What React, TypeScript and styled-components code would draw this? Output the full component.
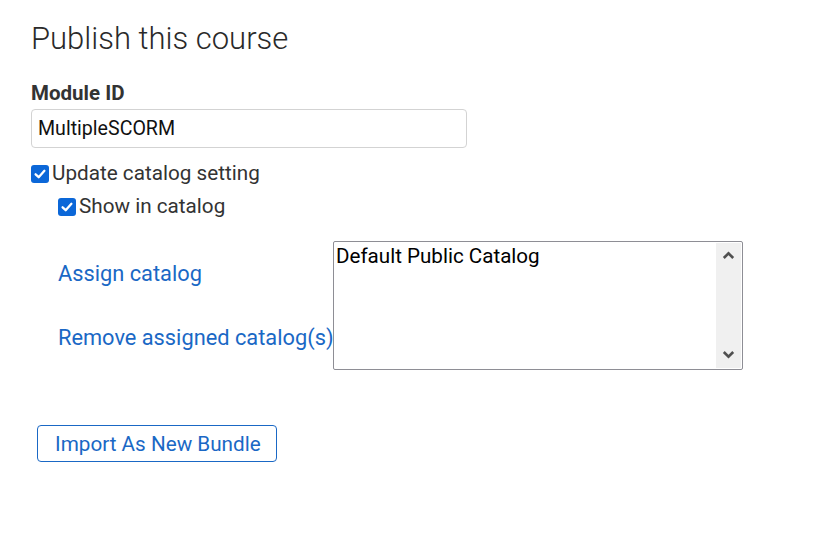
import styled, { createGlobalStyle } from 'styled-components';

const GlobalStyle = createGlobalStyle`
  html, body {
    margin: 0;
    padding: 0;
    background: #fff;
  }
  body {
    font-family: Roboto, "Liberation Sans", Arial, sans-serif;
    color: #333;
  }
`;

const Page = styled.div`
  padding: 20px 32px 40px 31px;
  display: flex;
  flex-direction: column;
  align-items: flex-start;
`;

const Title = styled.h1`
  margin: 0;
  font-size: 31px;
  font-weight: 300;
  line-height: 38px;
  color: #2a2a2a;
`;

const FieldLabel = styled.label`
  margin-top: 24px;
  font-size: 20.5px;
  font-weight: 700;
  line-height: 22px;
  color: #333;
`;

const TextInput = styled.input`
  box-sizing: border-box;
  margin-top: 5px;
  width: 436px;
  height: 39px;
  padding: 0 6px;
  border: 1px solid #d3d3d3;
  border-radius: 4px;
  font-family: inherit;
  font-size: 19.6px;
  color: #111;
  outline: none;
`;

const CheckRow = styled.label<{ $indent?: number }>`
  display: flex;
  align-items: center;
  margin-left: ${({ $indent }) => $indent ?? 0}px;
  font-size: 20.7px;
  line-height: 33px;
  color: #333;
  cursor: pointer;
`;

const CheckBox = styled.span`
  width: 18px;
  height: 18px;
  border-radius: 3px;
  background: #0b67d8;
  display: inline-flex;
  align-items: center;
  justify-content: center;
  margin-right: 3px;
  flex-shrink: 0;
`;

const CatalogRow = styled.div`
  display: flex;
  align-items: stretch;
  margin-top: 18px;
  margin-left: 27px;
`;

const LinkColumn = styled.div`
  width: 275px;
  display: flex;
  flex-direction: column;
  justify-content: center;
  gap: 40px;
`;

const TextLink = styled.a`
  font-size: 21.8px;
  line-height: 24px;
  color: #1a68c5;
  text-decoration: none;
  white-space: nowrap;
  cursor: pointer;
`;

const ListBox = styled.div`
  box-sizing: border-box;
  width: 410px;
  height: 129px;
  padding: 1px;
  border: 1px solid #8e8e95;
  border-radius: 2px;
  display: flex;
`;

const ListOptions = styled.div`
  flex: 1;
  padding: 0 1px;
`;

const ListOption = styled.div`
  font-size: 20.6px;
  line-height: 26px;
  color: #000;
`;

const ScrollTrack = styled.div`
  width: 25px;
  background: #f0f0f0;
  display: flex;
  flex-direction: column;
  justify-content: space-between;
  align-items: center;
  padding: 8px 0 9px;
  box-sizing: border-box;
`;

const OutlineButton = styled.button`
  margin-top: 55px;
  margin-left: 6px;
  height: 37px;
  padding: 0 15px 0 17px;
  background: #fff;
  border: 1px solid #1a68c5;
  border-radius: 4px;
  font-family: inherit;
  font-size: 20.7px;
  color: #1a68c5;
  cursor: pointer;
`;

function Tick() {
  return (
    <svg width="14" height="14" viewBox="0 0 14 14">
      <path d="M2.6 7.3 L5.7 10.2 L11.4 3.8" fill="none" stroke="#fff" strokeWidth="2.3" strokeLinecap="round" strokeLinejoin="round" />
    </svg>
  );
}

function Chevron({ up }: { up?: boolean }) {
  return (
    <svg width="13" height="9" viewBox="0 0 13 9">
      <path
        d={up ? 'M1.8 7 L6.5 2.3 L11.2 7' : 'M1.8 2 L6.5 6.7 L11.2 2'}
        fill="none"
        stroke="#505050"
        strokeWidth="2.6"
      />
    </svg>
  );
}

export default function App() {
  return (
    <>
      <GlobalStyle />
      <Page>
        <Title>Publish this course</Title>
        <FieldLabel htmlFor="module-id">Module ID</FieldLabel>
        <TextInput id="module-id" defaultValue="MultipleSCORM" />
        <CheckRow style={{ marginTop: 9 }}>
          <CheckBox><Tick /></CheckBox>
          Update catalog setting
        </CheckRow>
        <CheckRow $indent={27}>
          <CheckBox><Tick /></CheckBox>
          Show in catalog
        </CheckRow>
        <CatalogRow>
          <LinkColumn>
            <TextLink>Assign catalog</TextLink>
            <TextLink>Remove assigned catalog(s)</TextLink>
          </LinkColumn>
          <ListBox>
            <ListOptions>
              <ListOption>Default Public Catalog</ListOption>
            </ListOptions>
            <ScrollTrack>
              <Chevron up />
              <Chevron />
            </ScrollTrack>
          </ListBox>
        </CatalogRow>
        <OutlineButton>Import As New Bundle</OutlineButton>
      </Page>
    </>
  );
}
